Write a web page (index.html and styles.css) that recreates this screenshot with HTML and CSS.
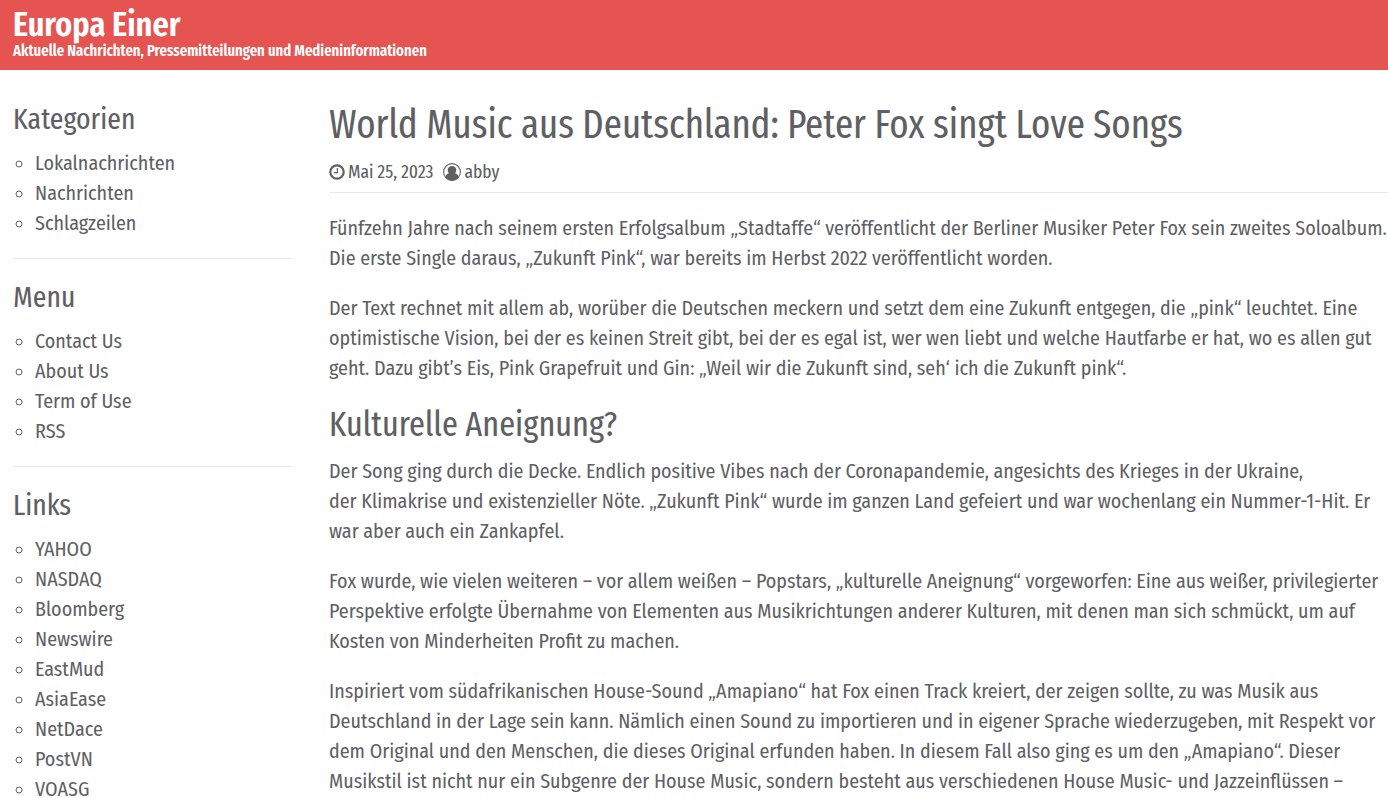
FILE: index.html
```
<!DOCTYPE html>
<html lang="de">
<head>
    <meta charset="UTF-8">
    <meta name="viewport" content="width=device-width, initial-scale=1.0">
    <title>World Music aus Deutschland: Peter Fox singt Love Songs</title>
    <link rel="stylesheet" href="styles.css">
</head>
<body>
    <header class="site-header">
        <a class="site-title" href="#">Europa Einer</a>
        <p class="site-description">Aktuelle Nachrichten, Pressemitteilungen und Medieninformationen</p>
    </header>

    <div class="container">
        <aside class="sidebar">
            <section class="widget">
                <h3>Kategorien</h3>
                <ul>
                    <li><a href="#">Lokalnachrichten</a></li>
                    <li><a href="#">Nachrichten</a></li>
                    <li><a href="#">Schlagzeilen</a></li>
                </ul>
            </section>
            <section class="widget">
                <h3>Menu</h3>
                <ul>
                    <li><a href="#">Contact Us</a></li>
                    <li><a href="#">About Us</a></li>
                    <li><a href="#">Term of Use</a></li>
                    <li><a href="#">RSS</a></li>
                </ul>
            </section>
            <section class="widget">
                <h3>Links</h3>
                <ul>
                    <li><a href="#">YAHOO</a></li>
                    <li><a href="#">NASDAQ</a></li>
                    <li><a href="#">Bloomberg</a></li>
                    <li><a href="#">Newswire</a></li>
                    <li><a href="#">EastMud</a></li>
                    <li><a href="#">AsiaEase</a></li>
                    <li><a href="#">NetDace</a></li>
                    <li><a href="#">PostVN</a></li>
                    <li><a href="#">VOASG</a></li>
                </ul>
            </section>
        </aside>

        <main class="content">
            <h1>World Music aus Deutschland: Peter Fox singt Love Songs</h1>
            <div class="meta">
                <span class="meta-item">
                    <svg class="icon-clock" viewBox="0 0 16 16" aria-hidden="true">
                        <circle cx="8" cy="8" r="6.7" fill="none" stroke="currentColor" stroke-width="2.2"/>
                        <path d="M8.4 4v4.6H5" fill="none" stroke="currentColor" stroke-width="1.2"/>
                    </svg>
                    <a href="#">Mai 25, 2023</a>
                </span>
                <span class="meta-item">
                    <svg class="icon-user" viewBox="0 0 18 18" aria-hidden="true">
                        <circle cx="9" cy="9" r="8.4" fill="none" stroke="currentColor" stroke-width="1.1"/>
                        <path d="M9 3c2.600 0 4.300 1.700 4.300 4.100 0 1.300-.5 2.400-1.300 3.200 2 .4 3.300 1.600 3.700 3.900C14.200 16.400 11.800 17.500 9 17.500s-5.200-1.100-6.700-3.300c.4-2.300 1.700-3.500 3.700-3.900-.8-.8-1.300-1.900-1.300-3.200C4.700 4.700 6.400 3 9 3z" fill="currentColor"/>
                    </svg>
                    <a href="#">abby</a>
                </span>
            </div>

            <p>Fünfzehn Jahre nach seinem ersten Erfolgsalbum „Stadtaffe“ veröffentlicht der Berliner Musiker Peter Fox sein zweites Soloalbum. Die erste Single daraus, „Zukunft Pink“, war bereits im Herbst 2022 veröffentlicht worden.</p>

            <p>Der Text rechnet mit allem ab, worüber die Deutschen meckern und setzt dem eine Zukunft entgegen, die „pink“ leuchtet. Eine optimistische Vision, bei der es keinen Streit gibt, bei der es egal ist, wer wen liebt und welche Hautfarbe er hat, wo es allen gut geht. Dazu gibt’s Eis, Pink Grapefruit und Gin: „Weil wir die Zukunft sind, seh‘ ich die Zukunft pink“.</p>

            <h2>Kulturelle Aneignung?</h2>
            <p>Der Song ging durch die Decke. Endlich positive Vibes nach der Coronapandemie, angesichts des Krieges in der Ukraine, der&nbsp;Klimakrise und existenzieller Nöte. „Zukunft Pink“ wurde im ganzen Land gefeiert und war wochenlang ein Nummer-1-Hit. Er war aber auch ein Zankapfel.</p>

            <p>Fox wurde, wie vielen weiteren – vor allem weißen – Popstars, „kulturelle Aneignung“ vorgeworfen: Eine aus weißer, privilegierter Perspektive erfolgte Übernahme von Elementen aus Musikrichtungen anderer Kulturen, mit denen man sich schmückt, um auf Kosten von Minderheiten Profit zu machen.</p>

            <p>Inspiriert vom südafrikanischen House-Sound „Amapiano“ hat Fox einen Track kreiert, der zeigen sollte, zu was Musik aus Deutschland in der Lage sein kann. Nämlich einen Sound zu importieren und in eigener Sprache wiederzugeben, mit Respekt vor dem Original und den Menschen, die dieses Original erfunden haben. In diesem Fall also ging es um den „Amapiano“. Dieser Musikstil ist nicht nur ein Subgenre der House Music, sondern besteht aus verschiedenen House Music- und Jazzeinflüssen –</p>
        </main>
    </div>
</body>
</html>
```
FILE: styles.css
```
* {
    box-sizing: border-box;
}
body {
    margin: 0;
    font-family: "Fira Sans Condensed", "Liberation Sans Narrow", sans-serif;
    font-size: 20px;
    line-height: 30px;
    color: #5e6063;
    background: #fff;
}
a {
    color: inherit;
    text-decoration: none;
}
h1, h2, h3, .meta, .site-header {
    font-family: "Fira Sans Extra Condensed", "Fira Sans Condensed", "Liberation Sans Narrow", sans-serif;
}
h1, h2, h3 {
    margin: 0;
    font-weight: 400;
}
h1 {
    font-size: 40px;
    line-height: 48px;
}
h2 {
    margin-bottom: 11px;
    font-size: 35px;
    line-height: 42px;
}
h3 {
    margin-bottom: 11px;
    font-size: 30px;
    line-height: 36px;
}
p {
    margin: 0 0 20px;
}
.site-header {
    padding: 6px 13px 10px;
    color: #fff;
    font-weight: 600;
    background: #e55451;
}
.site-title {
    display: block;
    font-size: 35px;
    line-height: 36px;
}
.site-description {
    margin: 0;
    font-size: 16px;
    line-height: 18px;
}
.container {
    display: grid;
    grid-template-columns: 279px minmax(0, 1fr);
    column-gap: 37px;
    padding: 31px 0 0 13px;
}
.widget {
    margin-bottom: 20px;
    border-bottom: 1px solid #e8e8e8;
    padding-bottom: 20px;
}
.widget:last-child {
    margin: 0;
    border: 0;
    padding: 0;
}
.widget ul {
    margin: 0;
    padding-left: 22px;
    list-style: circle;
}
.meta {
    display: flex;
    gap: 10px;
    margin: 8px 0 20px;
    border-bottom: 1px solid #e8e8e8;
    padding-bottom: 5px;
    font-size: 19px;
}
.meta-item {
    display: flex;
    align-items: center;
    gap: 3px;
}
.icon-clock {
    width: 16px;
    height: 16px;
}
.icon-user {
    width: 18px;
    height: 18px;
}
```
